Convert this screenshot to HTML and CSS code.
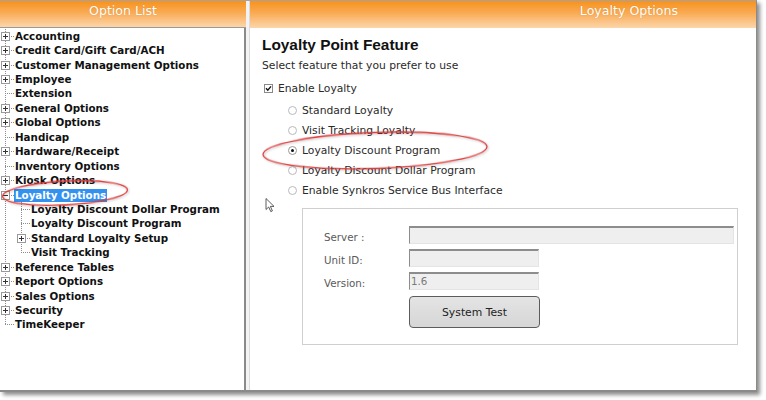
FILE: index.html
```html
<!DOCTYPE html>
<html>
<head>
<meta charset="utf-8">
<link rel="stylesheet" href="styles.css">
</head>
<body>
<div class="stage">
  <div class="window">
    <div class="left">
      <div class="hdr hdr-left">Option List</div>
      <div class="tree">
        <ul class="lvl">
          <li class="row"><span class="gut"><svg class="box" width="9" height="9" viewBox="0 0 9 9"><rect x="0.5" y="0.5" width="8" height="8" fill="#fff" stroke="#9a9a9a"/><path d="M2 4.5h5M4.5 2v5" stroke="#333"/></svg></span><span class="lbl">Accounting</span></li>
          <li class="row"><span class="gut"><svg class="box" width="9" height="9" viewBox="0 0 9 9"><rect x="0.5" y="0.5" width="8" height="8" fill="#fff" stroke="#9a9a9a"/><path d="M2 4.5h5M4.5 2v5" stroke="#333"/></svg></span><span class="lbl">Credit Card/Gift Card/ACH</span></li>
          <li class="row"><span class="gut"><svg class="box" width="9" height="9" viewBox="0 0 9 9"><rect x="0.5" y="0.5" width="8" height="8" fill="#fff" stroke="#9a9a9a"/><path d="M2 4.5h5M4.5 2v5" stroke="#333"/></svg></span><span class="lbl">Customer Management Options</span></li>
          <li class="row"><span class="gut"><svg class="box" width="9" height="9" viewBox="0 0 9 9"><rect x="0.5" y="0.5" width="8" height="8" fill="#fff" stroke="#9a9a9a"/><path d="M2 4.5h5M4.5 2v5" stroke="#333"/></svg></span><span class="lbl">Employee</span></li>
          <li class="row"><span class="gut"></span><span class="lbl">Extension</span></li>
          <li class="row"><span class="gut"><svg class="box" width="9" height="9" viewBox="0 0 9 9"><rect x="0.5" y="0.5" width="8" height="8" fill="#fff" stroke="#9a9a9a"/><path d="M2 4.5h5M4.5 2v5" stroke="#333"/></svg></span><span class="lbl">General Options</span></li>
          <li class="row"><span class="gut"><svg class="box" width="9" height="9" viewBox="0 0 9 9"><rect x="0.5" y="0.5" width="8" height="8" fill="#fff" stroke="#9a9a9a"/><path d="M2 4.5h5M4.5 2v5" stroke="#333"/></svg></span><span class="lbl">Global Options</span></li>
          <li class="row"><span class="gut"></span><span class="lbl">Handicap</span></li>
          <li class="row"><span class="gut"><svg class="box" width="9" height="9" viewBox="0 0 9 9"><rect x="0.5" y="0.5" width="8" height="8" fill="#fff" stroke="#9a9a9a"/><path d="M2 4.5h5M4.5 2v5" stroke="#333"/></svg></span><span class="lbl">Hardware/Receipt</span></li>
          <li class="row"><span class="gut"></span><span class="lbl">Inventory Options</span></li>
          <li class="row"><span class="gut"><svg class="box" width="9" height="9" viewBox="0 0 9 9"><rect x="0.5" y="0.5" width="8" height="8" fill="#fff" stroke="#9a9a9a"/><path d="M2 4.5h5M4.5 2v5" stroke="#333"/></svg></span><span class="lbl">Kiosk Options</span></li>
          <li class="row"><span class="gut"><svg class="box" width="9" height="9" viewBox="0 0 9 9"><rect x="0.5" y="0.5" width="8" height="8" fill="#fff" stroke="#9a9a9a"/><path d="M2 4.5h5" stroke="#333"/></svg></span><span class="lbl sel">Loyalty Options</span></li>
          <li class="sub">
            <ul class="lvl">
              <li class="row"><span class="gut"></span><span class="lbl">Loyalty Discount Dollar Program</span></li>
              <li class="row"><span class="gut"></span><span class="lbl">Loyalty Discount Program</span></li>
              <li class="row"><span class="gut"><svg class="box" width="9" height="9" viewBox="0 0 9 9"><rect x="0.5" y="0.5" width="8" height="8" fill="#fff" stroke="#9a9a9a"/><path d="M2 4.5h5M4.5 2v5" stroke="#333"/></svg></span><span class="lbl">Standard Loyalty Setup</span></li>
              <li class="row"><span class="gut"></span><span class="lbl">Visit Tracking</span></li>
            </ul>
          </li>
          <li class="row"><span class="gut"><svg class="box" width="9" height="9" viewBox="0 0 9 9"><rect x="0.5" y="0.5" width="8" height="8" fill="#fff" stroke="#9a9a9a"/><path d="M2 4.5h5M4.5 2v5" stroke="#333"/></svg></span><span class="lbl">Reference Tables</span></li>
          <li class="row"><span class="gut"><svg class="box" width="9" height="9" viewBox="0 0 9 9"><rect x="0.5" y="0.5" width="8" height="8" fill="#fff" stroke="#9a9a9a"/><path d="M2 4.5h5M4.5 2v5" stroke="#333"/></svg></span><span class="lbl">Report Options</span></li>
          <li class="row"><span class="gut"><svg class="box" width="9" height="9" viewBox="0 0 9 9"><rect x="0.5" y="0.5" width="8" height="8" fill="#fff" stroke="#9a9a9a"/><path d="M2 4.5h5M4.5 2v5" stroke="#333"/></svg></span><span class="lbl">Sales Options</span></li>
          <li class="row"><span class="gut"><svg class="box" width="9" height="9" viewBox="0 0 9 9"><rect x="0.5" y="0.5" width="8" height="8" fill="#fff" stroke="#9a9a9a"/><path d="M2 4.5h5M4.5 2v5" stroke="#333"/></svg></span><span class="lbl">Security</span></li>
          <li class="row"><span class="gut"></span><span class="lbl">TimeKeeper</span></li>
        </ul>
      </div>
    </div>
    <div class="splitter"></div>
    <div class="right">
      <div class="hdr hdr-right">Loyalty Options</div>
      <div class="content">
        <div class="title">Loyalty Point Feature</div>
        <div class="sub-text">Select feature that you prefer to use</div>
        <div class="check-row"><span class="chk"><svg width="9" height="9" viewBox="0 0 9 9"><rect x="0.5" y="0.5" width="8" height="8" fill="#fff" stroke="#8a8a8a"/><path d="M2 4.3l1.8 1.9L7 2.4" fill="none" stroke="#111" stroke-width="1.4"/></svg></span>Enable Loyalty</div>
        <div class="radios">
          <div class="radio-row"><span class="radio"></span>Standard Loyalty</div>
          <div class="radio-row"><span class="radio"></span>Visit Tracking Loyalty</div>
          <div class="radio-row"><span class="radio on"></span>Loyalty Discount Program</div>
          <div class="radio-row"><span class="radio"></span>Loyalty Discount Dollar Program</div>
          <div class="radio-row"><span class="radio"></span>Enable Synkros Service Bus Interface</div>
        </div>
        <div class="group">
          <div class="form">
            <span class="flabel">Server :</span><span class="input wide"></span>
            <span class="flabel">Unit ID:</span><span class="input short"></span>
            <span class="flabel">Version:</span><span class="input short">1.6</span>
            <span></span><span class="btn">System Test</span>
          </div>
        </div>
      </div>
    </div>
  </div>
  <svg class="overlay" width="766" height="400" viewBox="0 0 766 400">
    <g class="marks" fill="none" stroke="#e23a3a" stroke-width="1.3">
      <ellipse cx="65" cy="193" rx="62.5" ry="12" transform="rotate(-3 65 193)"/>
      <ellipse cx="375" cy="150.5" rx="112" ry="18" transform="rotate(-2 375 150.5)"/>
    </g>
    <path d="M266 198.5 L266 209.5 L268.7 207 L270.8 211.6 L272.4 210.9 L270.4 206.4 L274 206.4 Z" fill="#fff" stroke="#333" stroke-width="0.8" stroke-linejoin="round"/>
  </svg>
</div>
</body>
</html>
```
FILE: styles.css
```css
html, body {
  margin: 0;
  padding: 0;
  background: #fff;
}
.stage {
  position: relative;
  width: 766px;
  height: 400px;
}
.window {
  display: flex;
  box-sizing: border-box;
  width: 757px;
  height: 392px;
  border-top: 1px solid #a3a3a3;
  border-bottom: 2px solid #8a8a8a;
  border-right: 1px solid #8a8a8a;
  background: #fff;
  box-shadow: 3px 3px 4px rgba(0, 0, 0, 0.45);
}
.hdr {
  background: linear-gradient(to bottom, #f7921c 0%, #f9ab55 45%, #fcd6ab 100%);
  color: #fff;
  font-family: "DejaVu Sans", Verdana, sans-serif;
  font-size: 12.6px;
  line-height: 19px;
  text-shadow: 0 0 1px rgba(170, 90, 0, 0.45);
}
.left {
  width: 246px;
  flex: none;
  display: flex;
  flex-direction: column;
}
.hdr-left {
  height: 26px;
  border-bottom: 1px solid #9a9a9a;
  text-align: center;
}
.tree {
  flex: 1;
  border-right: 2px solid #8a8a8a;
  padding-top: 1px;
  font-family: "DejaVu Sans", Verdana, sans-serif;
  font-weight: bold;
  font-size: 10.3px;
  color: #111;
}
.lvl {
  list-style: none;
  margin: 0;
  padding: 0;
  background-image: repeating-linear-gradient(to bottom, #8c8c8c 0 1px, transparent 1px 2px);
  background-size: 1px calc(100% - 7px);
  background-position: 5px 0;
  background-repeat: no-repeat;
}
.sub .lvl {
  margin-left: 16px;
}
.row {
  display: flex;
  align-items: center;
  height: 14.45px;
  white-space: nowrap;
}
.gut {
  width: 14px;
  height: 100%;
  flex: none;
  display: flex;
  align-items: center;
  background-image: repeating-linear-gradient(to right, #8c8c8c 0 1px, transparent 1px 2px);
  background-size: 9px 1px;
  background-position: 5px 50%;
  background-repeat: no-repeat;
}
.box {
  display: block;
  margin-left: 1px;
}
.lbl {
  padding: 0 1px;
  line-height: 13px;
}
.lbl.sel {
  background: #3392ef;
  color: #fff;
}
.splitter {
  width: 3px;
  flex: none;
  background: #f3f3f3;
  border-right: 1px solid #dcdcdc;
}
.right {
  flex: 1;
  min-width: 0;
  display: flex;
  flex-direction: column;
}
.hdr-right {
  height: 27px;
  text-align: right;
  padding-right: 78px;
}
.content {
  flex: 1;
  padding: 8px 0 0 12px;
  font-family: "DejaVu Sans", Verdana, sans-serif;
  font-size: 10.75px;
  color: #2a2a2a;
}
.title {
  font-family: "Liberation Sans", Arial, sans-serif;
  font-weight: bold;
  font-size: 15.4px;
  line-height: 18px;
  color: #111;
}
.sub-text {
  margin-top: 5px;
  line-height: 14px;
}
.check-row {
  margin-top: 8px;
  display: flex;
  align-items: center;
  height: 14px;
  padding-left: 2px;
}
.chk {
  display: flex;
  margin-right: 5px;
}
.radios {
  margin-top: 5px;
  padding-left: 26px;
}
.radio-row {
  display: flex;
  align-items: center;
  height: 20px;
}
.radio {
  width: 7px;
  height: 7px;
  border: 1px solid #b9b9b9;
  border-radius: 50%;
  background: #fff;
  margin-right: 5px;
  display: flex;
  align-items: center;
  justify-content: center;
}
.radio.on {
  border-color: #999;
}
.radio.on::after {
  content: "";
  width: 3px;
  height: 3px;
  border-radius: 50%;
  background: #111;
}
.group {
  box-sizing: border-box;
  margin: 8px 0 0 40px;
  width: 436px;
  border: 1px solid #cfcfcf;
  padding: 17px 4px 16px 21px;
}
.form {
  display: grid;
  grid-template-columns: 85px 1fr;
  row-gap: 5px;
  align-items: center;
  font-size: 10.3px;
}
.flabel {
  color: #5a5a5a;
  padding-top: 4px;
}
.input {
  box-sizing: border-box;
  height: 18px;
  background: #efefef;
  border-top: 2px solid #8d8d8d;
  border-left: 1px solid #8d8d8d;
  border-right: 1px solid #e4e4e4;
  border-bottom: 1px solid #e4e4e4;
  color: #7a7a7a;
  padding-left: 1px;
  line-height: 15px;
}
.input.wide {
  width: 325px;
}
.input.short {
  width: 130px;
}
.btn {
  box-sizing: border-box;
  width: 131px;
  height: 32px;
  margin-top: 1px;
  border: 1px solid #5c5c5c;
  border-radius: 4px;
  background: linear-gradient(to bottom, #e4e4e4, #d6d6d6);
  display: flex;
  align-items: center;
  justify-content: center;
  color: #222;
  font-size: 10.8px;
}
.overlay {
  position: absolute;
  left: 0;
  top: 0;
  pointer-events: none;
}
.marks {
  filter: drop-shadow(1px 1px 1px rgba(0, 0, 0, 0.25));
}
```
